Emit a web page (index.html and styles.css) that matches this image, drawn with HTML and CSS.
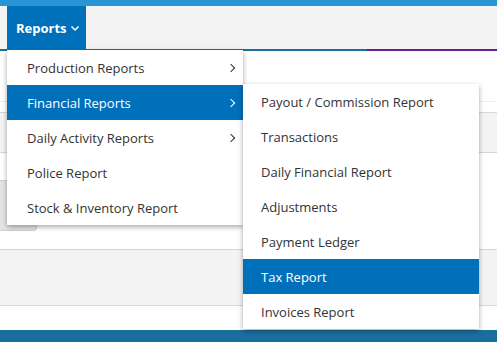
FILE: index.html
```html
<!DOCTYPE html>
<html lang="en">

<head>
    <meta charset="UTF-8">
    <meta name="viewport" content="width=device-width, initial-scale=1.0">
    <title>Reports</title>
    <link rel="stylesheet" href="styles.css">
</head>

<body>
    <div class="top-strip"></div>
    <nav class="navbar">
        <div class="nav-item">
            <a href="#" class="nav-link">Reports
                <svg class="caret-down" width="10" height="7" viewBox="0 0 10 7"><path d="M1.5 1.5L5 5l3.5-3.5" fill="none" stroke="#fff" stroke-width="1.5"/></svg>
            </a>
            <ul class="dropdown">
                <li class="menu-item"><a href="#">Production Reports<span class="chevron"></span></a></li>
                <li class="menu-item active">
                    <a href="#">Financial Reports<span class="chevron"></span></a>
                    <ul class="submenu">
                        <li class="menu-item"><a href="#">Payout / Commission Report</a></li>
                        <li class="menu-item"><a href="#">Transactions</a></li>
                        <li class="menu-item"><a href="#">Daily Financial Report</a></li>
                        <li class="menu-item"><a href="#">Adjustments</a></li>
                        <li class="menu-item"><a href="#">Payment Ledger</a></li>
                        <li class="menu-item active"><a href="#">Tax Report</a></li>
                        <li class="menu-item"><a href="#">Invoices Report</a></li>
                    </ul>
                </li>
                <li class="menu-item"><a href="#">Daily Activity Reports<span class="chevron"></span></a></li>
                <li class="menu-item"><a href="#">Police Report</a></li>
                <li class="menu-item"><a href="#">Stock &amp; Inventory Report</a></li>
            </ul>
        </div>
    </nav>
    <div class="accent-line"></div>

    <main class="page">
        <div class="spacer-top"></div>
        <div class="table-head"></div>
        <div class="toolbar">
            <div class="btn-ghost"></div>
        </div>
        <div class="band"></div>
    </main>
    <footer class="footer-bar"></footer>
</body>

</html>
```

FILE: styles.css
```css
body {
    font-family: "Open Sans", Arial, sans-serif;
    background-color: #fff;
    margin: 0;
    padding: 0;
    color: #333;
    overflow: hidden;
}

.top-strip {
    height: 6px;
    background-color: #2a95d5;
}

.navbar {
    height: 43px;
    background-color: #f3f3f3;
    padding-left: 7px;
    display: flex;
}

.nav-item {
    position: relative;
}

.nav-link {
    display: flex;
    align-items: center;
    gap: 3px;
    height: 43px;
    padding: 0 6px 0 9px;
    background-color: #0070ba;
    color: #fff;
    font-weight: bold;
    font-size: 13px;
    text-decoration: none;
}

.caret-down {
    flex-shrink: 0;
    margin-top: 1px;
}

.accent-line {
    height: 2px;
    background: linear-gradient(to right, #1c6e9f 0, #1c6e9f 367px, #6a1b9a 367px);
}

ul {
    list-style: none;
    margin: 0;
    padding: 0;
}

.dropdown {
    position: absolute;
    top: 44px;
    left: 0;
    width: 236px;
    background-color: #fff;
    box-shadow: 0 2px 5px rgba(0, 0, 0, 0.35);
    z-index: 10;
}

.menu-item {
    position: relative;
}

.menu-item a {
    display: flex;
    align-items: center;
    justify-content: space-between;
    height: 35px;
    padding: 0 9px 0 20px;
    color: #333;
    font-size: 13px;
    text-decoration: none;
}

.menu-item.active > a {
    background-color: #0070ba;
    color: #fff;
}

.chevron {
    width: 5px;
    height: 5px;
    border-right: 1.4px solid #333;
    border-top: 1.4px solid #333;
    transform: rotate(45deg);
}

.active > a .chevron {
    border-color: #fff;
}

.submenu {
    position: absolute;
    top: -1px;
    left: 100%;
    width: 236px;
    background-color: #fff;
    box-shadow: 0 2px 5px rgba(0, 0, 0, 0.35);
}

.submenu .menu-item a {
    padding-left: 18px;
}

.page {
    height: 279px;
}

.spacer-top {
    height: 50px;
    border-bottom: 1px solid #ececec;
}

.table-head {
    height: 10px;
    border-bottom: 1px solid #d6d6d6;
}

.toolbar {
    height: 39px;
    background-color: #f3f3f3;
    border-bottom: 1px solid #d6d6d6;
    position: relative;
}

.btn-ghost {
    position: absolute;
    left: 0;
    top: 67px;
    width: 36px;
    height: 49px;
    background-color: #e4e4e4;
    border: 1px solid #cfcfcf;
    border-left: none;
    border-radius: 0 0 4px 0;
}

.band {
    margin-top: 96px;
    height: 55px;
    background-color: #f3f3f3;
    border-top: 1px solid #d6d6d6;
    border-bottom: 1px solid #d6d6d6;
}

.footer-bar {
    height: 12px;
    background-color: #1a6e9f;
}
```
